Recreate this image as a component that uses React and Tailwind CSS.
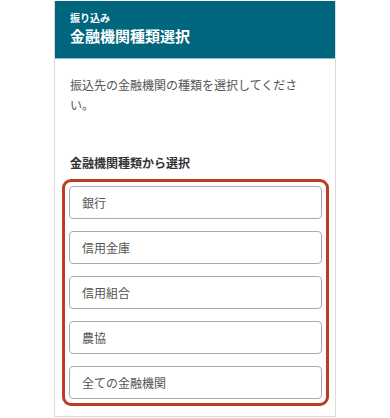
import React from 'react';

const types = ['銀行', '信用金庫', '信用組合', '農協', '全ての金融機関'];

function App() {
  return (
    <div
      className="min-h-screen bg-white"
      style={{ fontFamily: '"Noto Sans CJK JP", "Noto Sans", sans-serif' }}
    >
      <div className="mx-auto w-[282px] border-x border-b border-[#dcdcdc] pb-[10px]">
        {/* Header */}
        <div className="mt-[1px] h-[58px] border-b border-[#8fbcc8] bg-[#00667e] pl-[15px] pt-[10px] text-white">
          <div className="text-[10px] font-bold leading-[14px]">振り込み</div>
          <div className="mt-[1px] text-[15px] font-bold leading-[20px]">金融機関種類選択</div>
        </div>

        {/* Body */}
        <div className="pl-[15px] pr-[17px] pt-[16px]">
          <p className="text-[12px] leading-[20px] text-[#555]">
            振込先の金融機関の種類を選択してください。
          </p>
          <div className="mt-[39px] text-[12px] font-bold leading-[18px] text-[#333]">
            金融機関種類から選択
          </div>
        </div>

        <div className="ml-[7px] mr-[6px] mt-[7px] flex flex-col gap-[12px] rounded-[9px] border-[3px] border-[#bd3b25] p-[4px]">
          {types.map((t) => (
            <button
              key={t}
              className="flex h-[33px] items-center rounded-[4px] border border-[#ababab] bg-white pl-[12px] text-left text-[12px] text-[#555]"
            >
              {t}
            </button>
          ))}
        </div>
      </div>
    </div>
  );
}

export default App;
